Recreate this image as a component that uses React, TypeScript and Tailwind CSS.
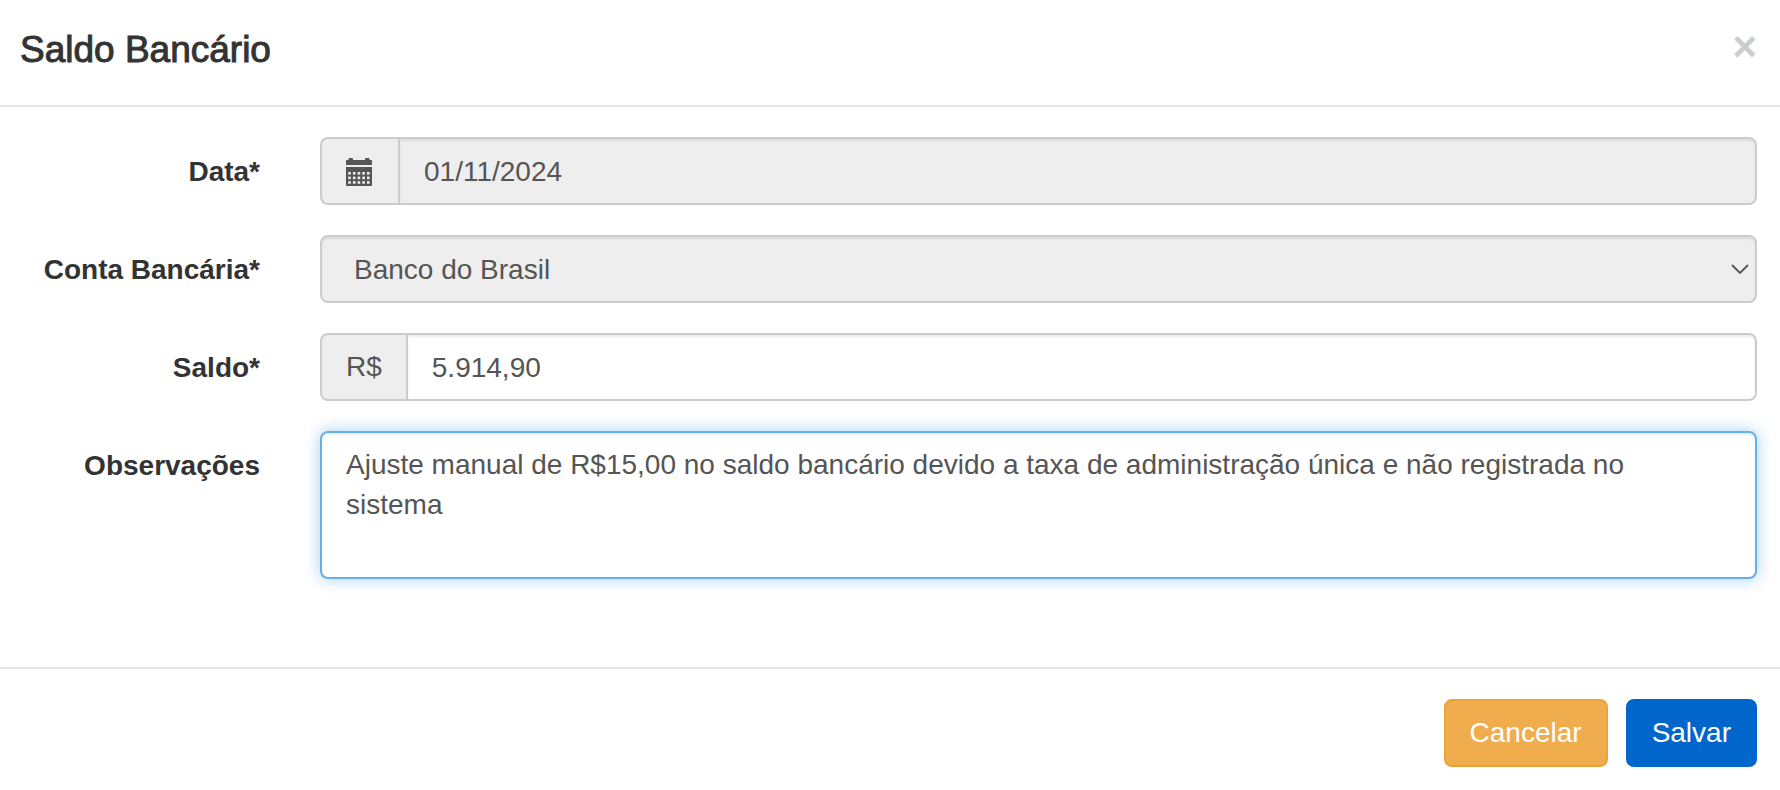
import { useState } from "react";
import type { ReactNode } from "react";

interface FormRowProps {
  id: string;
  label: string;
  children: ReactNode;
}

function FormRow({ id, label, children }: FormRowProps) {
  return (
    <div className="flex items-start gap-[60px]">
      <label
        htmlFor={id}
        className="w-60 shrink-0 pt-[15px] text-right font-bold text-[#333333]"
      >
        {label}
      </label>
      <div className="min-w-0 flex-1">{children}</div>
    </div>
  );
}

function Addon({ children }: { children: ReactNode }) {
  return (
    <span className="flex items-center rounded-l-lg border-2 border-r-0 border-[#cccccc] bg-[#eeeeee] px-6">
      {children}
    </span>
  );
}

function CalendarIcon() {
  const columns = [2.2, 6.9, 11.6, 16.3, 21];
  const rows = [14, 18.6, 23.2];

  return (
    <svg
      viewBox="0 -2 28 30"
      className="h-[30px] w-7"
      fill="currentColor"
      aria-hidden="true"
    >
      <path d="M0 7V3Q0 2 1 2H2.5V1Q2.5 0 3.5 0H6Q7 0 7 1V2H19V1Q19 0 20 0H22.5Q23.5 0 23.5 1V2H25Q26 2 26 3V7Z" />
      <path d="M0 9H26V27Q26 28 25 28H1Q0 28 0 27Z" />
      {rows.map((y) =>
        columns.map((x) => (
          <rect
            key={`${x}-${y}`}
            x={x}
            y={y}
            width="2.6"
            height="2.6"
            fill="#eeeeee"
          />
        ))
      )}
    </svg>
  );
}

const inputClass =
  "h-[68px] min-w-0 flex-1 rounded-r-lg border-2 border-[#cccccc] px-6 pt-[2px] text-[#555555] shadow-[inset_0_2px_2px_rgba(0,0,0,0.075)] outline-none";

export default function App() {
  const [balance, setBalance] = useState("5.914,90");
  const [notes, setNotes] = useState(
    "Ajuste manual de R$15,00 no saldo bancário devido a taxa de administração única e não registrada no sistema"
  );

  return (
    <form
      className="bg-white font-['Liberation_Sans',Arial,sans-serif] text-[28px] leading-[40px] text-[#555555]"
      onSubmit={(event) => event.preventDefault()}
    >
      <header className="flex items-start justify-between border-b-2 border-[#e5e5e5] pt-[30px] pr-[23px] pb-[35px] pl-5">
        <h4 className="text-[37px] leading-[40px] font-normal text-[#333333] [-webkit-text-stroke:1px_#333333]">
          Saldo Bancário
        </h4>
        <button
          type="button"
          aria-label="Fechar"
          className="text-[42px] leading-[34px] font-bold text-[#cccccc]"
        >
          ×
        </button>
      </header>

      <div className="flex flex-col gap-[30px] pt-[30px] pr-[23px] pb-[88px] pl-5">
        <FormRow id="data" label="Data*">
          <div className="flex">
            <Addon>
              <CalendarIcon />
            </Addon>
            <input
              id="data"
              type="text"
              value="01/11/2024"
              disabled
              className={`${inputClass} bg-[#eeeeee]`}
            />
          </div>
        </FormRow>

        <FormRow id="conta" label="Conta Bancária*">
          <div className="relative">
            <select
              id="conta"
              disabled
              className="block h-[68px] w-full appearance-none rounded-lg border-2 border-[#cccccc] bg-[#eeeeee] px-8 pt-[2px] text-[#555555] opacity-100 shadow-[inset_0_2px_2px_rgba(0,0,0,0.075)]"
            >
              <option>Banco do Brasil</option>
            </select>
            <svg
              viewBox="0 0 18 10"
              className="pointer-events-none absolute top-[29px] right-2 h-[10px] w-[18px]"
              fill="none"
              stroke="#555555"
              strokeWidth="1.8"
              aria-hidden="true"
            >
              <path d="M1 1L9 9L17 1" />
            </svg>
          </div>
        </FormRow>

        <FormRow id="saldo" label="Saldo*">
          <div className="flex">
            <Addon>R$</Addon>
            <input
              id="saldo"
              type="text"
              value={balance}
              onChange={(event) => setBalance(event.target.value)}
              className={`${inputClass} bg-white`}
            />
          </div>
        </FormRow>

        <FormRow id="observacoes" label="Observações">
          <textarea
            id="observacoes"
            rows={3}
            value={notes}
            onChange={(event) => setNotes(event.target.value)}
            className="block w-full resize-none rounded-lg border-2 border-[#66afe9] bg-white py-3 pr-10 pl-6 text-[#555555] shadow-[inset_0_2px_2px_rgba(0,0,0,0.075),0_0_16px_rgba(102,175,233,0.6)] outline-none"
          />
        </FormRow>
      </div>

      <footer className="flex justify-end gap-[18px] border-t-2 border-[#e5e5e5] pt-[30px] pr-[23px] pb-[22px] pl-5">
        <button
          type="button"
          className="rounded-lg border-2 border-[#eea236] bg-[#f0ad4e] px-6 py-3 text-white"
        >
          Cancelar
        </button>
        <button
          type="submit"
          className="rounded-lg border-2 border-[#0066cc] bg-[#0066cc] px-6 py-3 text-white"
        >
          Salvar
        </button>
      </footer>
    </form>
  );
}
